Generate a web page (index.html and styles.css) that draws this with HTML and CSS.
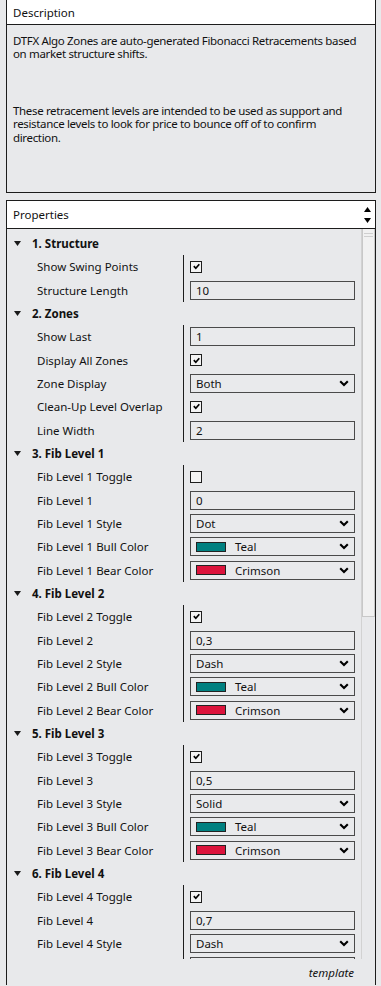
FILE: index.html
```html
<!DOCTYPE html>
<html>
<head>
<meta charset="utf-8">
<link rel="stylesheet" href="styles.css">
</head>
<body>
<div class="desc">
  <div class="desc-head">Description</div>
  <div class="desc-body">
    <p class="para"><span class="ln">DTFX Algo Zones are auto-generated Fibonacci Retracements based</span><span class="ln">on market structure shifts.</span></p>
    <p class="para para2"><span class="ln">These retracement levels are intended to be used as support and</span><span class="ln">resistance levels to look for price to bounce off of to confirm</span><span class="ln">direction.</span></p>
  </div>
</div>

<div class="props">
  <div class="props-head">
    <span>Properties</span>
    <span class="spin">
      <svg width="7" height="5" viewBox="0 0 7 5"><polygon points="0,5 7,5 3.5,0" fill="#000"/></svg>
      <svg width="7" height="5" viewBox="0 0 7 5"><polygon points="0,0 7,0 3.5,5" fill="#000"/></svg>
    </span>
  </div>
  <div class="props-main">
    <div class="viewport">
      <div class="list">
        <div class="sec-head"><svg class="tri" width="7" height="5" viewBox="0 0 7 5"><polygon points="0,0 7,0 3.5,5" fill="#1a1a1a"/></svg><span>1. Structure</span></div>
        <div class="row"><div class="lbl">Show Swing Points</div><div class="val"><span class="chk"><svg width="9" height="9" viewBox="0 0 9 9"><path d="M1.8 4.2 L3.8 6.3 L7.3 2.2" fill="none" stroke="#000" stroke-width="1.7"/></svg></span></div></div>
        <div class="row"><div class="lbl">Structure Length</div><div class="val"><span class="box">10</span></div></div>

        <div class="sec-head"><svg class="tri" width="7" height="5" viewBox="0 0 7 5"><polygon points="0,0 7,0 3.5,5" fill="#1a1a1a"/></svg><span>2. Zones</span></div>
        <div class="row"><div class="lbl">Show Last</div><div class="val"><span class="box">1</span></div></div>
        <div class="row"><div class="lbl">Display All Zones</div><div class="val"><span class="chk"><svg width="9" height="9" viewBox="0 0 9 9"><path d="M1.8 4.2 L3.8 6.3 L7.3 2.2" fill="none" stroke="#000" stroke-width="1.7"/></svg></span></div></div>
        <div class="row"><div class="lbl">Zone Display</div><div class="val"><span class="box drop"><span class="txt">Both</span><svg class="chev" width="10" height="7" viewBox="0 0 10 7"><path d="M1.2 1.2 L5 5 L8.8 1.2" fill="none" stroke="#000" stroke-width="2.1"/></svg></span></div></div>
        <div class="row"><div class="lbl">Clean-Up Level Overlap</div><div class="val"><span class="chk"><svg width="9" height="9" viewBox="0 0 9 9"><path d="M1.8 4.2 L3.8 6.3 L7.3 2.2" fill="none" stroke="#000" stroke-width="1.7"/></svg></span></div></div>
        <div class="row"><div class="lbl">Line Width</div><div class="val"><span class="box">2</span></div></div>

        <div class="sec-head"><svg class="tri" width="7" height="5" viewBox="0 0 7 5"><polygon points="0,0 7,0 3.5,5" fill="#1a1a1a"/></svg><span>3. Fib Level 1</span></div>
        <div class="row"><div class="lbl">Fib Level 1 Toggle</div><div class="val"><span class="chk"></span></div></div>
        <div class="row"><div class="lbl">Fib Level 1</div><div class="val"><span class="box">0</span></div></div>
        <div class="row"><div class="lbl">Fib Level 1 Style</div><div class="val"><span class="box drop"><span class="txt">Dot</span><svg class="chev" width="10" height="7" viewBox="0 0 10 7"><path d="M1.2 1.2 L5 5 L8.8 1.2" fill="none" stroke="#000" stroke-width="2.1"/></svg></span></div></div>
        <div class="row"><div class="lbl">Fib Level 1 Bull Color</div><div class="val"><span class="box drop"><span class="sw teal"></span><span class="txt">Teal</span><svg class="chev" width="10" height="7" viewBox="0 0 10 7"><path d="M1.2 1.2 L5 5 L8.8 1.2" fill="none" stroke="#000" stroke-width="2.1"/></svg></span></div></div>
        <div class="row"><div class="lbl">Fib Level 1 Bear Color</div><div class="val"><span class="box drop"><span class="sw crimson"></span><span class="txt">Crimson</span><svg class="chev" width="10" height="7" viewBox="0 0 10 7"><path d="M1.2 1.2 L5 5 L8.8 1.2" fill="none" stroke="#000" stroke-width="2.1"/></svg></span></div></div>

        <div class="sec-head"><svg class="tri" width="7" height="5" viewBox="0 0 7 5"><polygon points="0,0 7,0 3.5,5" fill="#1a1a1a"/></svg><span>4. Fib Level 2</span></div>
        <div class="row"><div class="lbl">Fib Level 2 Toggle</div><div class="val"><span class="chk"><svg width="9" height="9" viewBox="0 0 9 9"><path d="M1.8 4.2 L3.8 6.3 L7.3 2.2" fill="none" stroke="#000" stroke-width="1.7"/></svg></span></div></div>
        <div class="row"><div class="lbl">Fib Level 2</div><div class="val"><span class="box">0,3</span></div></div>
        <div class="row"><div class="lbl">Fib Level 2 Style</div><div class="val"><span class="box drop"><span class="txt">Dash</span><svg class="chev" width="10" height="7" viewBox="0 0 10 7"><path d="M1.2 1.2 L5 5 L8.8 1.2" fill="none" stroke="#000" stroke-width="2.1"/></svg></span></div></div>
        <div class="row"><div class="lbl">Fib Level 2 Bull Color</div><div class="val"><span class="box drop"><span class="sw teal"></span><span class="txt">Teal</span><svg class="chev" width="10" height="7" viewBox="0 0 10 7"><path d="M1.2 1.2 L5 5 L8.8 1.2" fill="none" stroke="#000" stroke-width="2.1"/></svg></span></div></div>
        <div class="row"><div class="lbl">Fib Level 2 Bear Color</div><div class="val"><span class="box drop"><span class="sw crimson"></span><span class="txt">Crimson</span><svg class="chev" width="10" height="7" viewBox="0 0 10 7"><path d="M1.2 1.2 L5 5 L8.8 1.2" fill="none" stroke="#000" stroke-width="2.1"/></svg></span></div></div>

        <div class="sec-head"><svg class="tri" width="7" height="5" viewBox="0 0 7 5"><polygon points="0,0 7,0 3.5,5" fill="#1a1a1a"/></svg><span>5. Fib Level 3</span></div>
        <div class="row"><div class="lbl">Fib Level 3 Toggle</div><div class="val"><span class="chk"><svg width="9" height="9" viewBox="0 0 9 9"><path d="M1.8 4.2 L3.8 6.3 L7.3 2.2" fill="none" stroke="#000" stroke-width="1.7"/></svg></span></div></div>
        <div class="row"><div class="lbl">Fib Level 3</div><div class="val"><span class="box">0,5</span></div></div>
        <div class="row"><div class="lbl">Fib Level 3 Style</div><div class="val"><span class="box drop"><span class="txt">Solid</span><svg class="chev" width="10" height="7" viewBox="0 0 10 7"><path d="M1.2 1.2 L5 5 L8.8 1.2" fill="none" stroke="#000" stroke-width="2.1"/></svg></span></div></div>
        <div class="row"><div class="lbl">Fib Level 3 Bull Color</div><div class="val"><span class="box drop"><span class="sw teal"></span><span class="txt">Teal</span><svg class="chev" width="10" height="7" viewBox="0 0 10 7"><path d="M1.2 1.2 L5 5 L8.8 1.2" fill="none" stroke="#000" stroke-width="2.1"/></svg></span></div></div>
        <div class="row"><div class="lbl">Fib Level 3 Bear Color</div><div class="val"><span class="box drop"><span class="sw crimson"></span><span class="txt">Crimson</span><svg class="chev" width="10" height="7" viewBox="0 0 10 7"><path d="M1.2 1.2 L5 5 L8.8 1.2" fill="none" stroke="#000" stroke-width="2.1"/></svg></span></div></div>

        <div class="sec-head"><svg class="tri" width="7" height="5" viewBox="0 0 7 5"><polygon points="0,0 7,0 3.5,5" fill="#1a1a1a"/></svg><span>6. Fib Level 4</span></div>
        <div class="row"><div class="lbl">Fib Level 4 Toggle</div><div class="val"><span class="chk"><svg width="9" height="9" viewBox="0 0 9 9"><path d="M1.8 4.2 L3.8 6.3 L7.3 2.2" fill="none" stroke="#000" stroke-width="1.7"/></svg></span></div></div>
        <div class="row"><div class="lbl">Fib Level 4</div><div class="val"><span class="box">0,7</span></div></div>
        <div class="row"><div class="lbl">Fib Level 4 Style</div><div class="val"><span class="box drop"><span class="txt">Dash</span><svg class="chev" width="10" height="7" viewBox="0 0 10 7"><path d="M1.2 1.2 L5 5 L8.8 1.2" fill="none" stroke="#000" stroke-width="2.1"/></svg></span></div></div>
        <div class="row"><div class="lbl"></div><div class="val"><span class="box"></span></div></div>
      </div>
      <div class="scrollbar"><div class="thumb"><span class="grip"></span><span class="grip"></span></div></div>
    </div>
    <div class="footer"><span class="tpl">template</span></div>
  </div>
</div>
</body>
</html>
```

FILE: styles.css
```css
* { box-sizing: border-box; }
html, body { margin: 0; padding: 0; }
body {
  background: #e8e9eb;
  font-family: "Noto Sans", "Open Sans", sans-serif;
  font-size: 11.5px;
  color: #111;
  width: 381px;
  height: 986px;
  overflow: hidden;
}
.desc {
  margin-left: 6px;
  width: 370px;
  border: 1px solid #1c1c1c;
  border-top: none;
}
.desc-head {
  background: #fff;
  height: 25px;
  border-bottom: 1px solid #1c1c1c;
  padding-left: 6px;
  line-height: 26px;
}
.desc-body {
  height: 167px;
  padding: 9px 0 0 6px;
  line-height: 13.4px;
  letter-spacing: -0.34px;
}
.para { margin: 0; }
.ln { display: block; white-space: nowrap; }
.para2 { margin-top: 43px; }

.props {
  margin-top: 7px;
  margin-left: 6px;
  width: 370px;
  height: 785px;
  border: 1px solid #1c1c1c;
  border-bottom: none;
}
.props-head {
  background: #fff;
  height: 28px;
  border-bottom: 1px solid #1c1c1c;
  padding-left: 6px;
  padding-right: 4px;
  display: flex;
  align-items: center;
  justify-content: space-between;
}
.spin {
  display: flex;
  flex-direction: column;
  gap: 6px;
  padding-top: 1px;
}
.spin svg { display: block; }
.props-main { display: flex; flex-direction: column; }
.viewport {
  height: 730px;
  display: flex;
  overflow: hidden;
}
.list {
  width: 354px;
  flex: none;
  padding-top: 3px;
}
.sec-head {
  height: 23.33px;
  display: grid;
  grid-template-columns: 18px auto;
  align-items: center;
  justify-content: start;
  font-weight: 700;
  padding-left: 7px;
}
.tri { display: block; }
.row {
  height: 23.33px;
  display: grid;
  grid-template-columns: 176px 1fr;
}
.lbl {
  padding-left: 30px;
  display: flex;
  align-items: center;
}
.val {
  border-left: 1px solid #1c1c1c;
  padding-left: 6px;
  display: flex;
  align-items: center;
}
.chk {
  width: 12px;
  height: 12px;
  border: 1px solid #1e1e1e;
  background: #f4f4f4;
  display: flex;
  align-items: center;
  justify-content: center;
}
.chk svg { display: block; }
.box {
  width: 165px;
  height: 19px;
  border: 1px solid #4a4a4a;
  background: #e9eaec;
  padding-left: 5px;
  display: flex;
  align-items: center;
}
.drop { padding-right: 5px; }
.drop .txt { flex: 1; }
.chev { display: block; }
.sw {
  width: 30px;
  height: 10px;
  border: 1px solid #222;
  margin-right: 9px;
}
.teal { background: #008080; }
.crimson { background: #dc143c; }

.scrollbar {
  width: 14px;
  flex: none;
  border-left: 1px solid #d2d2d2;
  background: #e8e9eb;
}
.thumb {
  height: 388px;
  background: #f1f1f1;
  border: 1px solid #c8c8c8;
  border-top: none;
  padding-top: 4px;
  display: flex;
  flex-direction: column;
  align-items: center;
  gap: 2px;
}
.grip {
  width: 9px;
  height: 1px;
  background: #cfcfcf;
}
.footer {
  height: 27px;
  display: flex;
  justify-content: flex-end;
  align-items: center;
  padding-right: 21px;
}
.tpl { font-style: italic; }
```
